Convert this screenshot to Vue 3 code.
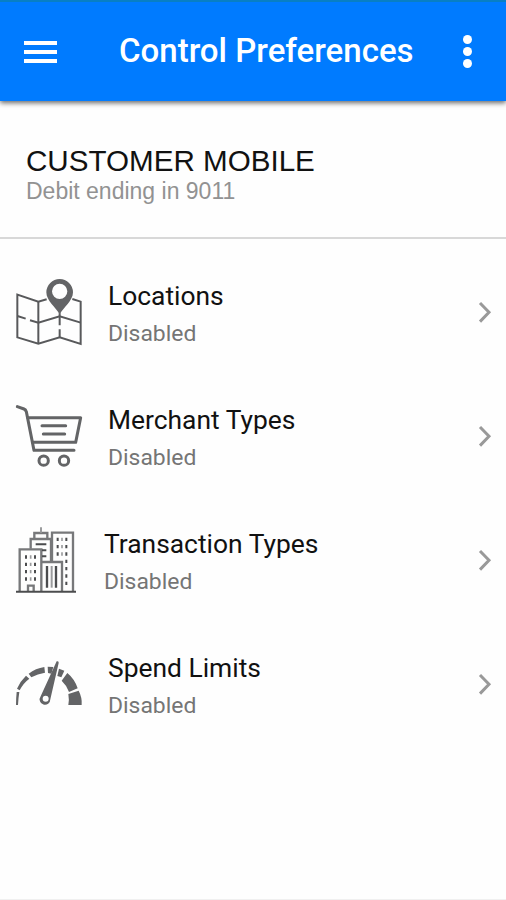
<template>
  <div class="screen">
    <header class="app-bar">
      <button class="menu-button" aria-label="Menu">
        <span></span>
        <span></span>
        <span></span>
      </button>
      <h1>Control Preferences</h1>
      <button class="more-button" aria-label="More">
        <span></span>
        <span></span>
        <span></span>
      </button>
    </header>

    <section class="card-info">
      <h2>CUSTOMER MOBILE</h2>
      <p>Debit ending in 9011</p>
    </section>

    <ul class="controls">
      <li v-for="item in controls" :key="item.id" class="control" :class="item.id">
        <!-- map with pin -->
        <svg v-if="item.id === 'locations'" class="icon" viewBox="27 24 210 210">
          <g fill="none" stroke="#58595b" stroke-width="6">
            <path d="M125 88 L100 95 L37 74 V202 L100 221 L164 202 L227 222 V95 L202 87" />
            <path d="M100 95 V221 M164 130 V166 M164 178 V202" />
            <path d="M37 138 L62 146 M75 151 L100 158 L164 139 L227 158" />
          </g>
          <path
            fill="#636466"
            fill-rule="evenodd"
            d="M164 134 C153 112 124 93 124 67 A40 40 0 0 1 204 67 C204 93 175 112 164 134 Z M164 41 A23 23 0 1 0 164 87 A23 23 0 1 0 164 41 Z"
          />
        </svg>

        <!-- shopping cart -->
        <svg v-else-if="item.id === 'merchants'" class="icon" viewBox="27 21 210 210">
          <g fill="none" stroke="#636466" stroke-width="9" stroke-linecap="round" stroke-linejoin="round">
            <path d="M37 35 L57 42 Q62 44 64 50 L87 166 H207" />
            <path d="M69 68 H227 L212 142 H84" />
            <path d="M111 92 H182 M115 117 H179" />
            <circle cx="116" cy="197" r="14" />
            <circle cx="177" cy="197" r="14" />
          </g>
        </svg>

        <!-- city buildings -->
        <svg v-else-if="item.id === 'transactions'" class="icon" viewBox="27 24 210 210">
          <g fill="none" stroke="#77787a" stroke-width="7">
            <path d="M44 220 V94 H109 V220" />
            <path d="M77 92 V63 H138 V130" />
            <path d="M88 62 V45 H127 V62" />
            <path d="M141 130 V44 H204 V220" />
            <path d="M110 132 H171 V220" />
            <path d="M69 219 V203 H86 V219" />
          </g>
          <g fill="none" stroke="#4b4c4e">
            <path stroke-width="6" d="M33 221 H213" />
            <path stroke-width="6" d="M92 79 H124 M111 97 H124 M111 115 H124" />
            <path stroke-width="7" d="M126 144 V209 M153 144 V209" />
            <path stroke-width="6" stroke-dasharray="10 12" d="M63 112 V190 M90 112 V190" />
            <path stroke-width="6" stroke-dasharray="10 12" d="M158 59 V125 M184 59 V203" />
          </g>
          <g fill="none" stroke="#9a9b9d">
            <path stroke-width="6" d="M108 28 V44" />
            <path stroke-width="6" d="M140 144 V209" />
            <path stroke-width="5" stroke-dasharray="10 12" d="M77 112 V190 M171 59 V125" />
          </g>
        </svg>

        <!-- gauge -->
        <svg v-else class="icon" viewBox="27 15 210 210">
          <g fill="#636466">
            <path d="M33 180 Q33 160 35 141 H43 Q40 160 39 180 Z" />
            <path d="M36 131 Q46 108 63 92 L73 101 Q54 115 44 136 Z" />
            <path d="M71 86 Q92 70 118 66 L120 83 Q98 86 79 97 Z" />
            <path d="M128 65 L145 66 L139 86 L129 84 Z" />
            <path d="M162 71 L178 77 L169 97 L157 93 Z" />
            <path d="M187 84 Q209 102 218 130 L192 141 Q185 121 170 107 Z" />
            <path d="M221 137 Q232 158 230 180 H190 Q193 164 190 147 Z" />
            <path
              fill-rule="evenodd"
              d="M155 49 Q162 47 161 54 L136 163 A16 16 0 1 1 107 154 Z M122 152 A9 9 0 1 0 122 170 A9 9 0 1 0 122 152 Z"
            />
          </g>
        </svg>

        <div class="label">
          <h3>{{ item.title }}</h3>
          <p>{{ item.status }}</p>
        </div>

        <svg class="chevron" viewBox="0 0 16 24">
          <path d="M3 2 L12 11.3 L3 20.6" fill="none" stroke="#999" stroke-width="3" />
        </svg>
      </li>
    </ul>
  </div>
</template>

<script setup>
const controls = [
  { id: 'locations', title: 'Locations', status: 'Disabled' },
  { id: 'merchants', title: 'Merchant Types', status: 'Disabled' },
  { id: 'transactions', title: 'Transaction Types', status: 'Disabled' },
  { id: 'limits', title: 'Spend Limits', status: 'Disabled' }
]
</script>

<style>
body {
  margin: 0;
  background: #fefefe;
}
</style>

<style scoped>
.screen {
  box-sizing: border-box;
  height: 900px;
  overflow: hidden;
  background: #fefefe;
  border-bottom: 1px solid #f0f0f0;
  font-family: Roboto, sans-serif;
}

h1,
h2,
h3,
p,
ul {
  margin: 0;
  padding: 0;
  white-space: nowrap;
}

button {
  padding: 0;
  border: none;
  background: none;
}

.app-bar {
  box-sizing: border-box;
  display: flex;
  align-items: center;
  height: 101px;
  padding: 0 34px 0 24px;
  border-top: 2px solid #087fc4;
  background: #007bff;
  box-shadow: 0 2px 5px rgba(0, 0, 0, 0.6);
}

.menu-button {
  display: flex;
  flex-direction: column;
  gap: 5px;
  width: 33px;
}

.menu-button span {
  height: 4px;
  background: #fff;
}

h1 {
  margin-left: 62px;
  padding-bottom: 2px;
  color: #fff;
  font-size: 33px;
  font-weight: 500;
  line-height: 40px;
}

.more-button {
  display: flex;
  flex-direction: column;
  gap: 3px;
  margin-left: auto;
}

.more-button span {
  width: 9px;
  height: 9px;
  border-radius: 50%;
  background: #fff;
}

.card-info {
  box-sizing: border-box;
  height: 138px;
  padding: 43px 26px 0;
  border-bottom: 2px solid #d8d8d8;
  font-family: 'Liberation Sans', Arial, sans-serif;
}

h2 {
  color: #111;
  font-size: 29.6px;
  font-weight: 400;
  line-height: 34px;
}

.card-info p {
  color: #929292;
  font-size: 23px;
  line-height: 26px;
}

.controls {
  padding-top: 12px;
  list-style: none;
}

.control {
  display: flex;
  align-items: center;
  height: 124px;
  padding: 0 13px 0 14px;
}

.icon {
  flex: none;
  width: 70px;
  height: 70px;
}

.label {
  flex: 1;
  margin-left: 24px;
  padding-top: 3px;
}

.transactions .label {
  margin-left: 20px;
}

h3 {
  color: #111;
  font-size: 26.4px;
  font-weight: 400;
  line-height: 38px;
}

.label p {
  color: #757575;
  font-size: 22.9px;
  line-height: 37px;
}

.chevron {
  width: 16px;
  height: 24px;
}
</style>
